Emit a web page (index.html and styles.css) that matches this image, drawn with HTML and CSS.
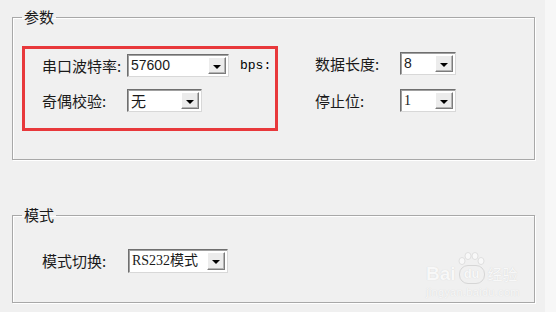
FILE: index.html
```html
<!DOCTYPE html>
<html>
<head>
    <title>参数设置</title>
    <meta charset="UTF-8">
    <link rel="stylesheet" href="styles.css">
</head>
<body>
    <div class="window">
        <fieldset class="group group-params">
            <legend>参数</legend>
            <div class="params">
                <div class="highlight">
                    <div class="field">
                        <label>串口波特率:</label>
                        <div class="combo combo-baud">
                            <span class="combo-value">57600</span>
                            <span class="combo-btn"></span>
                        </div>
                        <span class="unit">bps:</span>
                    </div>
                    <div class="field">
                        <label>奇偶校验:</label>
                        <div class="combo combo-parity">
                            <span class="combo-value cjk">无</span>
                            <span class="combo-btn"></span>
                        </div>
                    </div>
                </div>

                <div class="side">
                    <div class="field">
                        <label>数据长度:</label>
                        <div class="combo combo-small">
                            <span class="combo-value">8</span>
                            <span class="combo-btn"></span>
                        </div>
                    </div>
                    <div class="field">
                        <label>停止位:</label>
                        <div class="combo combo-small">
                            <span class="combo-value serif">1</span>
                            <span class="combo-btn"></span>
                        </div>
                    </div>
                </div>
            </div>
        </fieldset>

        <fieldset class="group group-mode">
            <legend>模式</legend>
            <div class="field mode-row">
                <label>模式切换:</label>
                <div class="combo combo-mode">
                    <span class="combo-value serif">RS232模式</span>
                    <span class="combo-btn"></span>
                </div>
            </div>
        </fieldset>

        <!-- водяной знак -->
        <div class="watermark">
            <div class="wm-logo">
                <span class="wm-bai">Bai</span>
                <span class="wm-paw">
                    <svg width="30" height="16" viewBox="0 0 30 16">
                        <ellipse cx="6" cy="9" rx="3" ry="3.5"/>
                        <ellipse cx="12" cy="4" rx="3" ry="3.5"/>
                        <ellipse cx="19" cy="4" rx="3" ry="3.5"/>
                        <ellipse cx="25" cy="9" rx="3" ry="3.5"/>
                    </svg>
                    <span class="wm-du">du</span>
                </span>
                <span class="wm-jy">经验</span>
            </div>
            <div class="wm-url">jingyan.baidu.com</div>
        </div>
    </div>
</body>
</html>
```

FILE: styles.css
```css
body {
    margin: 0;
    background: #f7f7f7;
    font-family: "Noto Sans CJK SC", "Liberation Sans", sans-serif;
    color: #1a1a1a;
}

.window {
    position: relative;
    width: 545px;
    height: 312px;
    background: #f0f0f0;
    overflow: hidden;
}

.group {
    box-sizing: border-box;
    width: 523px;
    margin: 0 0 0 12px;
    padding: 0;
    border: 1px solid #a8a8a8;
    box-shadow: inset 1px 1px 0 #fff, 1px 1px 0 #fff;
}

.group legend {
    margin-left: 9px;
    padding: 0 2px;
    font-size: 15px;
    line-height: 20px;
}

.group-params {
    margin-top: 7px;
    height: 153px;
}

.group-mode {
    margin-top: 45px;
    height: 98px;
}

.params {
    display: flex;
    align-items: flex-start;
    margin: 19px 0 0 9px;
}

.highlight {
    box-sizing: border-box;
    width: 256px;
    height: 85px;
    border: 3px solid #e8383b;
    padding: 5px 0 0 17px;
    display: flex;
    flex-direction: column;
    gap: 12px;
}

.side {
    margin-left: 37px;
    padding-top: 6px;
    display: flex;
    flex-direction: column;
    gap: 14px;
}

.field {
    display: flex;
    align-items: center;
    height: 23px;
}

.field label {
    width: 85px;
    font-size: 15px;
    line-height: 20px;
    white-space: nowrap;
}

.mode-row {
    margin: 24px 0 0 29px;
}

.mode-row label {
    width: 86px;
}

.combo {
    box-sizing: border-box;
    height: 23px;
    display: flex;
    align-items: stretch;
    background: #fff;
    border: 1px solid;
    border-color: #6f6f6f #d8d8d8 #d8d8d8 #6f6f6f;
    box-shadow: inset 1px 1px 0 #a0a0a0;
    padding: 2px;
}

.combo-baud {
    width: 102px;
}

.combo-parity {
    width: 75px;
}

.combo-small {
    width: 56px;
}

.combo-mode {
    width: 100px;
    height: 24px;
}

.combo-value {
    flex: 1;
    padding-left: 1px;
    font-family: "Liberation Sans", "Noto Sans CJK SC", sans-serif;
    font-size: 14px;
    line-height: 17px;
    white-space: nowrap;
}

.combo-value.cjk {
    font-family: "Noto Sans CJK SC", sans-serif;
    font-size: 15px;
}

.combo-value.serif {
    font-family: "Liberation Serif", "Noto Sans CJK SC", serif;
}

.combo-btn {
    position: relative;
    box-sizing: border-box;
    width: 18px;
    background: #ececec;
    border: 1px solid;
    border-color: #fff #7c7c7c #7c7c7c #fff;
    box-shadow: inset -1px -1px 0 #b4b4b4;
}

.combo-btn::after {
    content: "";
    position: absolute;
    left: 4px;
    top: 7px;
    border-left: 4px solid transparent;
    border-right: 4px solid transparent;
    border-top: 4px solid #000;
}

.unit {
    margin-left: 11px;
    font-family: "Liberation Mono", monospace;
    font-size: 13px;
    color: #000;
}

.watermark {
    position: absolute;
    left: 426px;
    top: 252px;
    color: #f8f8f8;
    text-shadow: 0 0 1px #d0d0d0;
    font-family: "Liberation Sans", sans-serif;
}

.wm-logo {
    display: flex;
    align-items: flex-end;
    height: 32px;
}

.wm-bai {
    font-size: 19px;
    font-weight: bold;
    line-height: 20px;
}

.wm-paw {
    position: relative;
    width: 30px;
    height: 32px;
}

.wm-paw svg {
    position: absolute;
    left: 0;
    top: 0;
    fill: #f8f8f8;
    stroke: #d6d6d6;
    stroke-width: 0.7;
}

.wm-du {
    position: absolute;
    left: 3px;
    top: 13px;
    width: 24px;
    height: 17px;
    border-radius: 9px;
    border: 1px solid #d6d6d6;
    font-size: 13px;
    font-weight: bold;
    line-height: 16px;
    text-align: center;
}

.wm-jy {
    margin-left: 2px;
    font-family: "Noto Sans CJK SC", sans-serif;
    font-size: 15px;
    line-height: 20px;
}

.wm-url {
    margin-top: 2px;
    font-size: 11px;
    letter-spacing: 0.3px;
}
```
